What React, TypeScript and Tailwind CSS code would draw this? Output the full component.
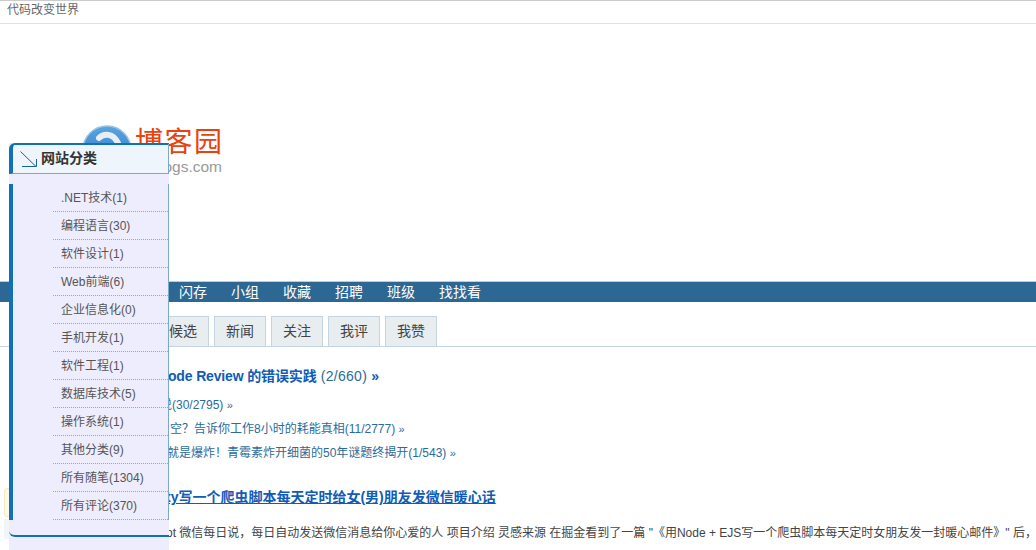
const navItems = ["闪存", "小组", "收藏", "招聘", "班级", "找找看"];
const tabs = ["候选", "新闻", "关注", "我评", "我赞"];
const categories = [
  ".NET技术(1)",
  "编程语言(30)",
  "软件设计(1)",
  "Web前端(6)",
  "企业信息化(0)",
  "手机开发(1)",
  "软件工程(1)",
  "数据库技术(5)",
  "操作系统(1)",
  "其他分类(9)",
  "所有随笔(1304)",
  "所有评论(370)",
];

function LogoMark() {
  return (
    <svg width="50" height="50" viewBox="0 0 50 50" className="shrink-0">
      <defs>
        <linearGradient id="logoBlue" x1="0" y1="0" x2="0" y2="1">
          <stop offset="0" stopColor="#5aa5e2" />
          <stop offset="1" stopColor="#1f6fbe" />
        </linearGradient>
      </defs>
      <circle cx="25" cy="25" r="24" fill="url(#logoBlue)" stroke="#9cc2e2" strokeWidth="1.5" />
      <path d="M17 13C22 8 31 8 36 18" fill="none" stroke="#e8eef4" strokeWidth="6" strokeLinecap="round" />
    </svg>
  );
}

function CategoryMenu() {
  return (
    <aside className="absolute left-[9px] top-[143px] h-[407px] w-[160px] bg-[#eeedfd] font-['Liberation_Sans','Noto_Sans_CJK_SC',sans-serif]">
      <div className="flex h-[31px] items-center rounded-tl-[6px] border-t-2 border-r border-b border-l-4 border-t-[#1071b8] border-r-[#7aa9c9] border-b-[#7aa9c9] border-l-[#1071b8] bg-[#eef5fd] pl-[7px]">
        <svg width="17" height="17" viewBox="0 0 17 17" className="mt-[1px] shrink-0" fill="none" stroke="#1a5f96">
          <path d="M0.5 0.5 16 15.5" />
          <path d="M2 15.5h14.5V8" />
        </svg>
        <span className="mb-[2px] ml-[4px] text-[14px] font-bold text-[#333]">网站分类</span>
      </div>
      <div className="h-[10px]" />
      <ul className="border-r border-l-4 border-r-[#7aa9c9] border-l-[#1071b8] pl-[40px]">
        {categories.map((item) => (
          <li
            key={item}
            className="flex h-[28px] items-center border-b border-dotted border-b-[#98a6c2] pl-[8px] text-[12px] text-[#555]"
          >
            {item}
          </li>
        ))}
      </ul>
      <div className="h-[17px] rounded-bl-[6px] border-b-2 border-b-[#1071b8]" />
    </aside>
  );
}

export default function App() {
  return (
    <div className="relative h-[550px] w-[1036px] overflow-hidden bg-white font-['Liberation_Sans','Noto_Sans_CJK_SC',sans-serif]">
      <div className="h-[24px] border-t border-b border-t-[#ccc] border-b-[#dde1e8] pl-[7px] text-[12px] leading-[18px] text-[#666]">
        代码改变世界
      </div>
      <header className="flex h-[257px] pl-[82px] pt-[101px]">
        <LogoMark />
        <div className="ml-[3px] flex flex-col pt-[2px]">
          <span className="text-[28px] leading-[31px] tracking-[1.5px] text-[#e8420f]">博客园</span>
          <span className="text-[15.5px] leading-[18px] text-[#999]">cnblogs.com</span>
        </div>
      </header>
      <nav className="flex h-[21px] items-center gap-[24px] border-t border-t-[#b8cde0] bg-[#2d6895] pl-[179px] text-[14px] text-white">
        {navItems.map((item) => (
          <span key={item}>{item}</span>
        ))}
      </nav>
      <div className="mt-[14px] flex h-[31px] gap-[5px] border-b border-b-[#c6d4e2] pl-[157px]">
        {tabs.map((tab) => (
          <div
            key={tab}
            className="flex h-[30px] w-[52px] items-center justify-center border border-b-0 border-[#c6d4e2] bg-[#e8edf0] text-[14px] text-[#444]"
          >
            {tab}
          </div>
        ))}
      </div>
      <main className="whitespace-nowrap">
        <div className="mt-[19px] pl-[158px] text-[14px] leading-[20px] text-[#105cb6]">
          <span className="font-bold tracking-[-0.15px]">Code Review 的错误实践</span>
          <span className="tracking-[0.3px] text-[#2b6b9a]"> (2/660) </span>
          <span className="font-bold">»</span>
        </div>
        <div className="mt-[10px] flex flex-col gap-[6px] text-[12px] leading-[18px] text-[#2b6b9a]">
          <div className="pl-[160px]">说(30/2795) <span className="text-[11px]">»</span></div>
          <div className="pl-[170px]">空？告诉你工作8小时的耗能真相(11/2777) <span className="text-[11px]">»</span></div>
          <div className="pl-[167px]">就是爆炸！青霉素炸开细菌的50年谜题终揭开(1/543) <span className="text-[11px]">»</span></div>
        </div>
        <div className="mt-[26px] flex">
          <div className="ml-[4px] w-[46px] shrink-0">
            <div className="h-[29px] rounded-[3px] border border-[#f3e7c4] bg-[#fdf8e6]" />
            <div className="mt-[2px] h-[20px] bg-[#f2f6f7]" />
          </div>
          <div className="min-w-0">
            <a className="ml-[116px] block text-[14px] leading-[18px] font-bold text-[#105cb6] underline">
              ty写一个爬虫脚本每天定时给女(男)朋友发微信暖心话
            </a>
            <p className="ml-[116px] mt-[17px] text-[12px] leading-[20px] text-[#444]">
              ot 微信每日说，每日自动发送微信消息给你心爱的人 项目介绍 灵感来源 在掘金看到了一篇 "《用Node + EJS写一个爬虫脚本每天定时女朋友发一封暖心邮件》" 后，
            </p>
          </div>
        </div>
      </main>
      <CategoryMenu />
    </div>
  );
}
